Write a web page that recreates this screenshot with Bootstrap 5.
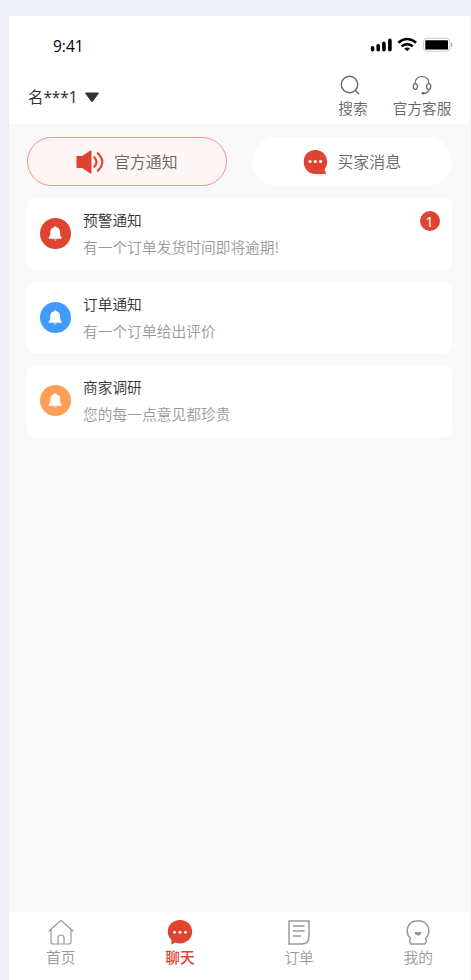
<!DOCTYPE html>
<html lang="zh-CN">
<head>
<meta charset="utf-8">
<meta name="viewport" content="width=device-width, initial-scale=1">
<title>官方通知</title>
<link href="https://cdn.jsdelivr.net/npm/bootstrap@5.3.0/dist/css/bootstrap.min.css" rel="stylesheet">
<style>
body{background:#eff0f5;font-family:"Noto Sans","Noto Sans CJK SC",sans-serif;font-size:14.7px;line-height:20px;color:#333}
svg{display:block;flex:none}
.zh{font-family:"Noto Sans CJK SC",sans-serif;font-weight:350}
.screen{height:980px;padding:16px 1px 0 9px}
.phone{background:#f9f9f9}
.status{height:54px;padding:3px 17.5px 0 44px;color:#000;font-family:"Open Sans",sans-serif;font-size:15.5px}
.status span{padding-top:3px}
.account{height:54px;padding:0 18.5px 0 19px}
.user{font-size:15.4px;padding-top:1px}
.user svg{margin-left:6px}
.actions{gap:25px}
.action{color:#666;padding-top:4px}
.action svg{margin-bottom:3px}
.content{padding:13px 18px 0 18px}
.switch{gap:25px;margin-bottom:12px}
.pill{flex:1 1 0;height:49px;border:1px solid #fff;background:#fff;color:#666;font-size:15.9px;gap:9.5px}
.pill.on{border-color:#ec9488;background:#fef5f4;border-width:1.4px}
.notice{height:71.6px;border:0;border-radius:8px;margin-bottom:12px;padding:0 12.5px;background:#fff}
.notice-text{margin-left:12.5px}
.notice-title{line-height:26px}
.notice-sub{line-height:27px;color:#999;letter-spacing:.05px}
.count{width:20px;height:20px;background:#df4331;font:15px/20px "Open Sans",sans-serif;margin-top:13px}
.tabs{height:68px;padding:7px 37px 0;color:#999}
.tabs svg{margin-bottom:2px}
.tab-on{color:#df4331;font-weight:500}
</style>
<script src="https://cdn.jsdelivr.net/npm/bootstrap@5.3.0/dist/js/bootstrap.bundle.min.js"></script>
</head>
<body>
<div class="screen">
<div class="phone d-flex flex-column h-100">
  <header class="bg-white">
    <div class="status d-flex align-items-center justify-content-between">
      <span>9:41</span>
      <svg width="83" height="16" viewBox="0 0 83 16">
        <path d="M2.600 10.800v1.900M8.200 8.800v3.900M13.900 6.300v6.400M19.900 3.200v9.500" stroke="#000" stroke-width="3.600" stroke-linecap="round"/>
        <g fill="none" stroke="#000" stroke-width="2.6"><path d="M28.300 5.700Q37.200-1.700 46.100 5.700M31.600 9.300Q37.200 4.800 42.800 9.300"/></g>
        <path d="M34.300 11.500Q37.200 9.300 40.100 11.500L37.200 14.300Z"/>
        <rect x="53.500" y="1.200" width="26.500" height="13" rx="3.500" fill="#fff" stroke="#ccc"/>
        <rect x="55.300" y="3.200" width="22.700" height="9.400" rx=".700"/>
        <path d="M81.700 5.700v4" stroke="#aaa" stroke-width="1.200"/>
      </svg>
    </div>
    <div class="account d-flex justify-content-between">
      <div class="user d-flex align-items-center"><span>名***1</span>
        <svg width="16" height="11" viewBox="0 0 16 11"><path d="M1.500 1h13L9 8.800q-1 1.200-2 0Z" fill="#333" stroke="#333" stroke-linejoin="round"/></svg>
      </div>
      <div class="actions d-flex zh">
        <div class="action d-flex flex-column align-items-center">
          <svg width="28" height="21" viewBox="0 0 28 21" fill="none" stroke="#666" stroke-width="1.400"><circle cx="10.500" cy="10.500" r="8.200"/><path d="M16.300 16.300l3.700 4"/></svg>
          <span>搜索</span>
        </div>
        <div class="action d-flex flex-column align-items-center">
          <svg width="20" height="21" viewBox="0 0 20 21" fill="none" stroke="#666" stroke-width="1.200"><path d="M3 9.300C3 5.200 6 2.500 10 2.500s7 2.700 7 6.800M17 15.500q-1 3.500-5 4"/><ellipse cx="3.300" cy="12.500" rx="2.100" ry="2.900"/><ellipse cx="16.700" cy="12.500" rx="2.100" ry="2.900"/><ellipse cx="11.300" cy="19.200" rx="1.700" ry="1.300" fill="#666" stroke="none"/></svg>
          <span>官方客服</span>
        </div>
      </div>
    </div>
  </header>

  <main class="content flex-grow-1 zh">
    <div class="switch d-flex">
      <div class="pill on rounded-pill d-flex align-items-center justify-content-center">
        <svg width="28" height="24" viewBox="0 0 28 24"><path d="M1.500 6H6L14 .800Q15.500 0 15.500 1.500v21q0 1.500-1.500.700L6 18H1.500Q.500 18 .500 17V7Q.500 6 1.500 6Z" fill="#df4331"/><path d="M18.200 7.200q4.600 4.800 0 9.600M21.800 3.200q9 8.800 0 17.600" fill="none" stroke="#df4331" stroke-width="2.100" stroke-linecap="round"/></svg>
        <span>官方通知</span>
      </div>
      <div class="pill rounded-pill d-flex align-items-center justify-content-center">
        <svg width="25" height="24" viewBox="0 0 25 24"><path d="M12.300 0C5.500 0 .700 5 .700 11.700S5.500 24 12 24h10.500q1.200-.300.300-1.300L21.500 19.500C28 11 22 0 12.300 0Z" fill="#df4331"/><g fill="#fff"><circle cx="7" cy="11.500" r="1.600"/><circle cx="12.300" cy="11.500" r="1.600"/><circle cx="17.600" cy="11.500" r="1.600"/></g></svg>
        <span>买家消息</span>
      </div>
    </div>

    <div class="notice d-flex align-items-center">
      <svg width="31" height="31" viewBox="0 0 31 31"><circle cx="15.500" cy="15.500" r="15.500" fill="#df4331"/><path id="bell" d="M15.200 8.300q-1 0-1.200.900C11.300 9.700 10.300 11.900 10.300 14.500c0 3-.400 4-1.500 4.800q-.600 1.400.400 1.400h12q1 0 .400-1.400c-1.100-.800-1.500-1.800-1.500-4.800 0-2.600-1-4.800-3.700-5.300q-.200-.900-1.200-.900ZM13.700 21.500h3q-.300 1.100-1.500 1.100t-1.500-1.100Z" fill="#fff"/></svg>
      <div class="notice-text flex-grow-1"><div class="notice-title">预警通知</div><div class="notice-sub">有一个订单发货时间即将逾期!</div></div>
      <span class="count rounded-circle text-white text-center align-self-start">1</span>
    </div>
    <div class="notice d-flex align-items-center">
      <svg width="31" height="31" viewBox="0 0 31 31"><circle cx="15.500" cy="15.500" r="15.500" fill="#429bf9"/><use href="#bell"/></svg>
      <div class="notice-text"><div class="notice-title">订单通知</div><div class="notice-sub">有一个订单给出评价</div></div>
    </div>
    <div class="notice d-flex align-items-center">
      <svg width="31" height="31" viewBox="0 0 31 31"><circle cx="15.500" cy="15.500" r="15.500" fill="#fd9f57"/><use href="#bell"/></svg>
      <div class="notice-text"><div class="notice-title">商家调研</div><div class="notice-sub">您的每一点意见都珍贵</div></div>
    </div>
  </main>

  <nav class="tabs bg-white d-flex justify-content-between zh">
    <div class="d-flex flex-column align-items-center">
      <svg width="26" height="26" viewBox="0 0 26 26" fill="none" stroke="#999" stroke-width="1.200" stroke-linejoin="round" stroke-linecap="round"><path d="M1 12L12.500 1.700q.500-.500 1 0L25 12M3 10.500V23q0 2 2 2h16q2 0 2-2V10.500M10 25v-6q0-3 3-3t3 3v6"/></svg>
      <span>首页</span>
    </div>
    <div class="tab-on d-flex flex-column align-items-center">
      <svg width="26" height="26" viewBox="0 0 26 26"><path d="M13 .900C6 .900.700 6 .700 12.500c0 3.500 1.500 6.300 3.800 8.300l-.200 4q.200 1 1 .500l2.700-1.800q2.300.900 5 .900c7 0 12.200-5.300 12.200-11.900S20 .900 13 .900Z" fill="#df4331"/><g fill="#fff"><circle cx="7.600" cy="13.300" r="1.400"/><circle cx="13" cy="13.300" r="1.400"/><circle cx="18.400" cy="13.300" r="1.400"/></g></svg>
      <span>聊天</span>
    </div>
    <div class="d-flex flex-column align-items-center">
      <svg width="26" height="26" viewBox="0 0 26 26" fill="none" stroke="#999" stroke-width="1.500"><path d="M3 2h20v15.500q0 7.500-7.500 7.500H3ZM7 7h11.500M7 12h11.500M7 17h8"/></svg>
      <span>订单</span>
    </div>
    <div class="d-flex flex-column align-items-center">
      <svg width="26" height="26" viewBox="0 0 26 26" fill="none" stroke="#999" stroke-width="1.500" stroke-linejoin="round"><path d="M5.500 19.500C-.500 13.500 1.800 1.700 13 1.700s13.500 11.800 7.500 17.800q2 3-.500 5.500H6q-2.500-2.500-.500-5.500Z"/><path d="M9.500 13h7q-.500 3.500-3.500 3.500T9.500 13Z" fill="#999" stroke="none"/></svg>
      <span>我的</span>
    </div>
  </nav>
</div>
</div>
</body>
</html>
